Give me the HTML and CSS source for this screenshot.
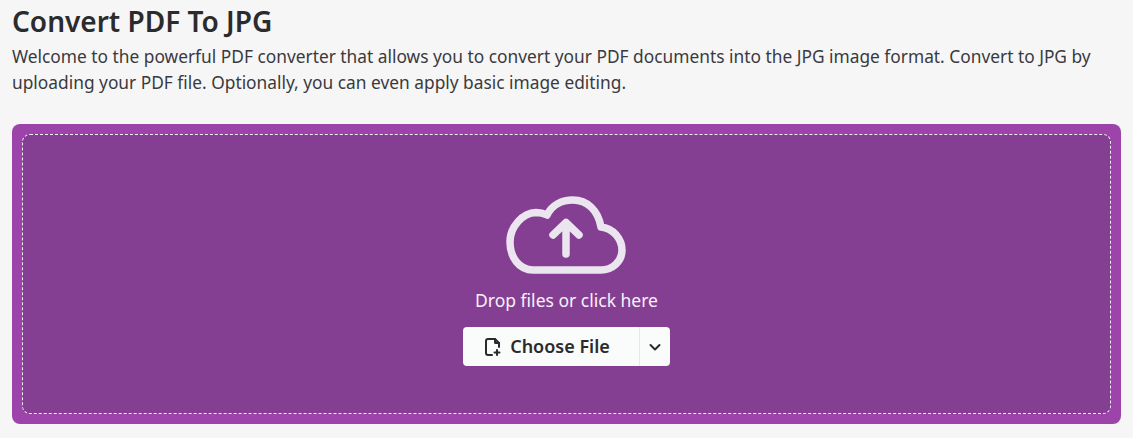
FILE: index.html
```html
<!DOCTYPE html>
<html lang="en">
<head>
  <meta charset="UTF-8" />
  <meta name="viewport" content="width=device-width, initial-scale=1.0"/>
  <title>Convert PDF To JPG</title>
  <link rel="stylesheet" href="styles.css">
</head>
<body>
  <h1 class="title">Convert PDF To JPG</h1>
  <p class="intro">Welcome to the powerful PDF converter that allows you to convert your PDF documents into the JPG image format. Convert to JPG by uploading your PDF file. Optionally, you can even apply basic image editing.</p>

  <div class="dropzone">
    <div class="dropzone-inner">
      <svg class="cloud" width="122" height="80" viewBox="0 0 122 80" fill="none" stroke="#ebe5f0" stroke-width="7.500" stroke-linecap="round" stroke-linejoin="round">
        <path d="M27 75C13 75 4 62 4 47C4 31 17 18 30 17.500C34 17.500 38 18.500 41 20C46 10 56 5 67 5C81 5 92 15 95 32C107 33 116 44 116 55C116 67 106 75 95 75Z"/>
        <path d="M60 59V28M47 40L60 27.500L73 40"/>
      </svg>
      <div class="drop-text">Drop files or click here</div>
      <div class="choose">
        <button class="choose-main">
          <svg width="18" height="20" viewBox="0 0 18 20" fill="none" stroke="#2b2b2e" stroke-width="2" stroke-linecap="round" stroke-linejoin="round">
            <path d="M8 18H4C2.900 18 2 17.100 2 16V4C2 2.900 2.900 2 4 2H11L15 6V10"/>
            <path d="M11 2V5.500C11 5.800 11.200 6 11.500 6H15"/>
            <path d="M13 13V18M10.500 15.500H15.500"/>
          </svg>
          <span class="choose-label">Choose File</span>
        </button>
        <button class="choose-arrow">
          <svg width="14" height="14" viewBox="0 0 14 14" fill="none" stroke="#2b2b2e" stroke-width="2" stroke-linecap="round" stroke-linejoin="round">
            <path d="M2.500 5L7 9.500L11.500 5"/>
          </svg>
        </button>
      </div>
    </div>
  </div>
</body>
</html>
```

FILE: styles.css
```css
* { box-sizing: border-box; margin: 0; padding: 0; }

body {
  font-family: "Noto Sans", Arial, sans-serif;
  background: #f6f6f7;
  color: #2f2f33;
  padding: 3px 12px 14px;
}

.title {
  font-size: 28px;
  font-weight: 600;
  line-height: 36px;
  color: #2b2b2e;
}

.intro {
  font-size: 17.330px;
  line-height: 26px;
  margin-top: 4px;
  margin-bottom: 29px;
  color: #3a3a3e;
}

.dropzone {
  background: #9c44aa;
  border-radius: 8px;
  padding: 10px;
  height: 300px;
}

.dropzone-inner {
  height: 100%;
  background: #853f92;
  border: 1px dashed #f7effa;
  border-radius: 8px;
  display: flex;
  flex-direction: column;
  align-items: center;
  padding-top: 60px;
}

.cloud {
  display: block;
}

.drop-text {
  color: #f7f1f9;
  font-size: 17.500px;
  line-height: 24px;
  margin-top: 13px;
}

.choose {
  display: flex;
  margin-top: 15px;
  background: #fafbfb;
  border-radius: 4px;
  height: 39px;
}

button {
  font-family: inherit;
  background: none;
  border: none;
  cursor: pointer;
  color: #2b2b2e;
  display: flex;
  align-items: center;
}

.choose-main {
  width: 177px;
  justify-content: center;
  gap: 8px;
  padding-right: 8px;
  font-size: 18px;
  font-weight: 600;
  border-right: 1px solid #e8e8ea;
}

.choose-label {
  margin-top: -2px;
}

.choose-arrow {
  width: 30px;
  justify-content: center;
}
```
